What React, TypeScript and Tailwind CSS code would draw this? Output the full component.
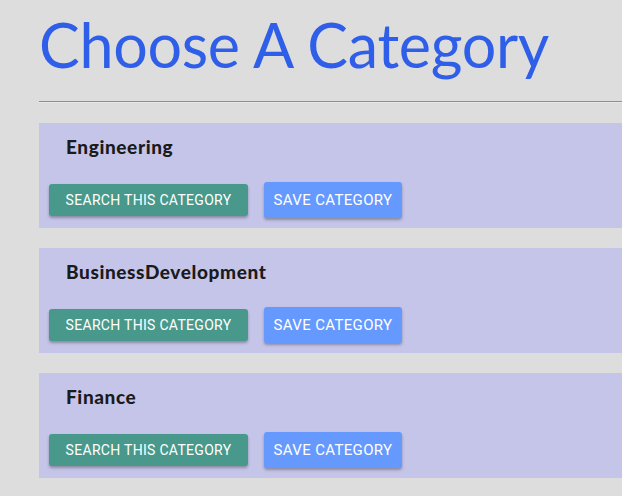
import React from 'react';

const categories = ['Engineering', 'BusinessDevelopment', 'Finance'];

function CategoryCard({ name }: { name: string }) {
  return (
    <div className="bg-[#c5c5ea] h-[105px] pt-[14px]">
      <h3 className="pl-[27px] text-[19px] font-black text-[#1b1b1b] leading-5 tracking-[0.6px] font-['Lato',sans-serif]">
        {name}
      </h3>
      <div className="flex items-center gap-[16px] pl-[10px] mt-[25px] font-['Roboto',sans-serif]">
        <button className="h-[32px] w-[199px] rounded-[3px] bg-[#48998c] text-white text-[14px] font-normal tracking-[0.3px] uppercase shadow-[0_2px_3px_rgba(0,0,0,0.3)]">
          Search this category
        </button>
        <button className="h-[36px] w-[138px] rounded-[3px] bg-[#6699fe] text-white text-[15px] font-normal tracking-[0.35px] uppercase shadow-[0_2px_3px_rgba(0,0,0,0.3)]">
          Save category
        </button>
      </div>
    </div>
  );
}

export default function App() {
  return (
    <div className="min-h-screen bg-[#dddddd] pl-[39px] overflow-hidden">
      <h1 className="pt-[10px] text-[#2f5fe8] text-[61px] leading-[70px] tracking-[-0.3px] font-['Lato',sans-serif] font-normal whitespace-nowrap">
        Choose A Category
      </h1>
      <hr className="mt-[21px] border-0 border-t border-t-[#8f8f8f] border-b border-b-[#e8e8e8]" />
      <div className="flex flex-col gap-[20px] mt-[20px]">
        {categories.map((c) => (
          <CategoryCard key={c} name={c} />
        ))}
      </div>
    </div>
  );
}
